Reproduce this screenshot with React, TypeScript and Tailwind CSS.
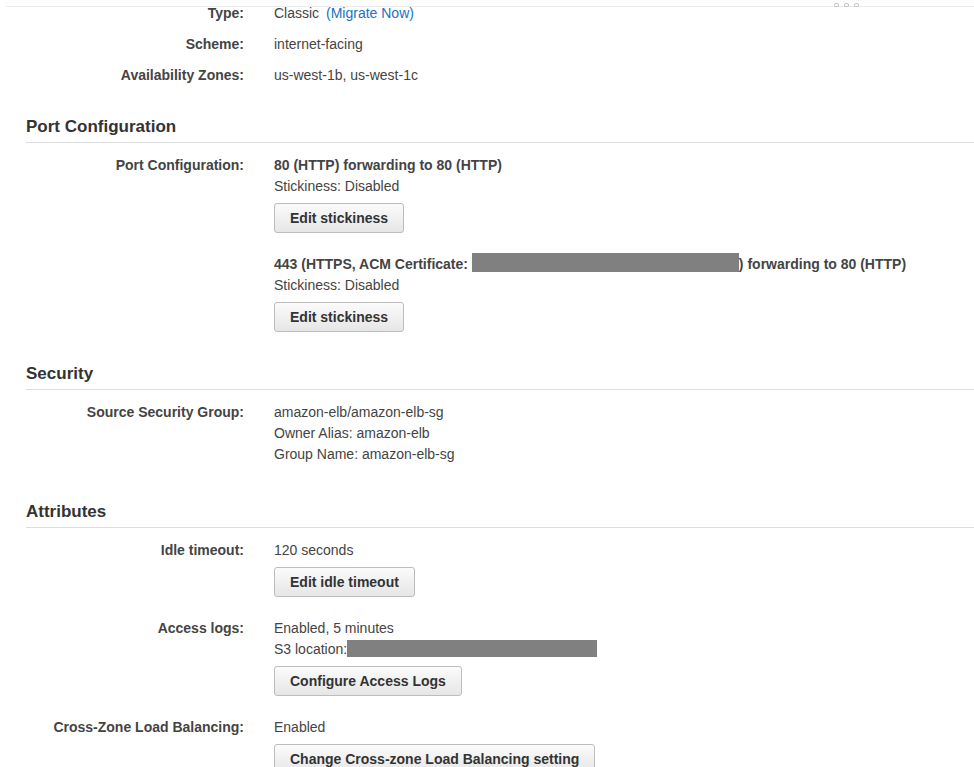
import React from "react";

const font = "font-['Liberation_Sans',Arial,Helvetica,sans-serif]";

function Row({ label, className = "", children }: { label: string; className?: string; children: React.ReactNode }) {
  return (
    <div className={`grid grid-cols-[244px_1fr] gap-x-[30px] ${className}`}>
      <div className="text-right font-bold text-[#444] leading-[21px]">{label}</div>
      <div className="text-[#444] leading-[21px]">{children}</div>
    </div>
  );
}

function Button({ children, className = "" }: { children: React.ReactNode; className?: string }) {
  return (
    <button
      className={`h-[30px] px-[15px] flex items-center rounded-[3px] border border-[#bdbdbd] bg-gradient-to-b from-[#fbfbfb] to-[#e6e6e6] font-bold text-[#333] text-[14px] ${className}`}
    >
      {children}
    </button>
  );
}

function SectionHeader({ title, className = "" }: { title: string; className?: string }) {
  return (
    <div className={`ml-[26px] border-b border-[#dedede] pt-[1px] pb-[3px] ${className}`}>
      <h2 className="text-[17px] leading-[24px] font-bold text-[#333]">{title}</h2>
    </div>
  );
}

function Redacted({ w, h }: { w: string; h: string }) {
  return <span className={`inline-block align-[-3px] bg-[#808080] ${w} ${h}`} />;
}

export default function App() {
  return (
    <div className={`relative min-h-screen bg-white text-[14px] ${font}`}>
      {/* header bottom edge scrolled over the content */}
      <div className="absolute top-0 left-[6px] right-0 h-[7px] border-b border-[#ebebeb]">
        <div className="absolute left-[828px] top-[3px] flex gap-[5px]">
          <span className="w-[5px] h-[4px] rounded-t-[2px] border border-[#c8c8c8]" />
          <span className="w-[5px] h-[4px] rounded-t-[2px] border border-[#c8c8c8]" />
          <span className="w-[5px] h-[4px] rounded-t-[2px] border border-[#c8c8c8]" />
        </div>
      </div>

      <div className="pt-[3px] pb-10">
        <Row label="Type:">
          Classic <span className="ml-[3px] text-[#2271c3]">(Migrate Now)</span>
        </Row>
        <Row label="Scheme:" className="mt-[10px]">internet-facing</Row>
        <Row label="Availability Zones:" className="mt-[10px]">us-west-1b, us-west-1c</Row>

        <SectionHeader title="Port Configuration" className="mt-[28px]" />
        <Row label="Port Configuration:" className="mt-[12px]">
          <div className="font-bold">80 (HTTP) forwarding to 80 (HTTP)</div>
          <div>Stickiness: Disabled</div>
          <Button className="mt-[6px]">Edit stickiness</Button>
          <div className="font-bold mt-[20px]">
            443 (HTTPS, ACM Certificate: <Redacted w="w-[267px]" h="h-[19px]" />) forwarding to 80 (HTTP)
          </div>
          <div>Stickiness: Disabled</div>
          <Button className="mt-[6px]">Edit stickiness</Button>
        </Row>

        <SectionHeader title="Security" className="mt-[29px]" />
        <Row label="Source Security Group:" className="mt-[12px]">
          <div>amazon-elb/amazon-elb-sg</div>
          <div>Owner Alias: amazon-elb</div>
          <div>Group Name: amazon-elb-sg</div>
        </Row>

        <SectionHeader title="Attributes" className="mt-[34px]" />
        <Row label="Idle timeout:" className="mt-[12px]">
          <div>120 seconds</div>
          <Button className="mt-[6px]">Edit idle timeout</Button>
        </Row>
        <Row label="Access logs:" className="mt-[21px]">
          <div>Enabled, 5 minutes</div>
          <div>
            S3 location:<Redacted w="w-[250px]" h="h-[17px]" />
          </div>
          <Button className="mt-[6px]">Configure Access Logs</Button>
        </Row>
        <Row label="Cross-Zone Load Balancing:" className="mt-[21px]">
          <div>Enabled</div>
          <Button className="mt-[6px]">Change Cross-zone Load Balancing setting</Button>
        </Row>
      </div>
    </div>
  );
}
